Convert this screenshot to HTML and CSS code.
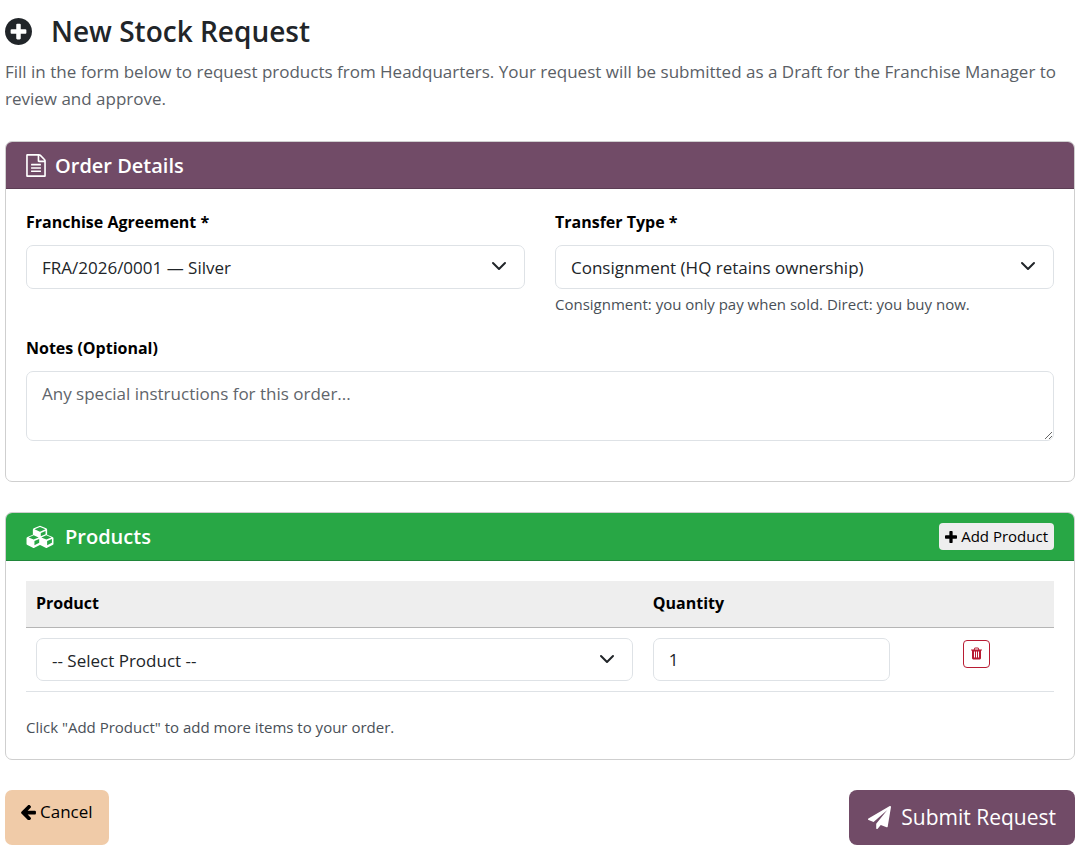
FILE: index.html
```html
<!DOCTYPE html>
<html lang="en">
<head>
<meta charset="utf-8">
<meta name="viewport" content="width=device-width, initial-scale=1">
<title>New Stock Request</title>
<link rel="stylesheet" href="styles.css">
</head>
<body>
<main class="page">
  <header class="intro">
    <h1 class="title">
      <svg class="icon icon-title" viewBox="128 128 1536 1536" aria-hidden="true"><path d="M1344 960v-128q0-26-19-45t-45-19h-256v-256q0-26-19-45t-45-19h-128q-26 0-45 19t-19 45v256h-256q-26 0-45 19t-19 45v128q0 26 19 45t45 19h256v256q0 26 19 45t45 19h128q26 0 45-19t19-45v-256h256q26 0 45-19t19-45zM1664 896q0 209-103 385.5t-279.5 279.5-385.5 103-385.5-103-279.5-279.5-103-385.5 103-385.5 279.5-279.5 385.5-103 385.5 103 279.5 279.5 103 385.5z"/></svg>
      New Stock Request
    </h1>
    <p class="lead">Fill in the form below to request products from Headquarters. Your request will be submitted as a Draft for the Franchise Manager to review and approve.</p>
  </header>

  <form class="form">
    <section class="card">
      <div class="card-header card-header-order">
        <h2 class="card-title">
          <svg class="icon icon-file" viewBox="0 0 1536 1792" aria-hidden="true"><path d="M1468 380q28 28 48 76t20 88v1152q0 40-28 68t-68 28H96q-40 0-68-28t-28-68V96q0-40 28-68t68-28h896q40 0 88 20t76 48zM1024 136v376h376q-10-29-22-41l-313-313q-12-12-41-22zM1408 1664V640H992q-40 0-68-28t-28-68V128H128v1536h1280zM384 800q0-14 9-23t23-9h704q14 0 23 9t9 23v64q0 14-9 23t-23 9H416q-14 0-23-9t-9-23v-64zM1120 1024q14 0 23 9t9 23v64q0 14-9 23t-23 9H416q-14 0-23-9t-9-23v-64q0-14 9-23t23-9h704zM1120 1280q14 0 23 9t9 23v64q0 14-9 23t-23 9H416q-14 0-23-9t-9-23v-64q0-14 9-23t23-9h704z"/></svg>
          Order Details
        </h2>
      </div>
      <div class="card-body order-body">
        <div class="field-row">
          <div class="field">
            <label class="label" for="agreement">Franchise Agreement *</label>
            <div class="select-wrap">
              <select class="control select" id="agreement"><option>FRA/2026/0001 — Silver</option></select>
              <svg class="chevron" viewBox="0 0 16 16" aria-hidden="true"><path d="m2 5 6 6 6-6"/></svg>
            </div>
          </div>
          <div class="field">
            <label class="label" for="transfer">Transfer Type *</label>
            <div class="select-wrap">
              <select class="control select" id="transfer"><option>Consignment (HQ retains ownership)</option><option>Direct</option></select>
              <svg class="chevron" viewBox="0 0 16 16" aria-hidden="true"><path d="m2 5 6 6 6-6"/></svg>
            </div>
            <small class="help">Consignment: you only pay when sold. Direct: you buy now.</small>
          </div>
        </div>
        <div class="field">
          <label class="label" for="notes">Notes (Optional)</label>
          <textarea class="control notes" id="notes" rows="2" placeholder="Any special instructions for this order..."></textarea>
        </div>
      </div>
    </section>

    <section class="card">
      <div class="card-header card-header-products">
        <h2 class="card-title card-title-wide">
          <svg class="icon icon-cubes" viewBox="0 0 2176 1856" aria-hidden="true"><path d="M640 1632l384-192v-314l-384 164v342zM576 1178l404-173-404-173-404 173zM1664 1632l384-192v-314l-384 164v342zM1600 1178l404-173-404-173-404 173zM1152 909l384-165v-266l-384 164v267zM1088 538l441-189-441-189-441 189zM2176 1088v416q0 36-19 67t-52 47l-448 224q-25 14-57 14t-57-14l-448-224q-4-2-7-4-2 2-7 4l-448 224q-25 14-57 14t-57-14l-448-224q-33-16-52-47t-19-67v-416q0-38 21.5-70t56.5-48l434-186v-400q0-38 21.5-70t56.5-48l448-192q23-10 50-10t50 10l448 192q35 16 56.5 48t21.5 70v400l434 186q36 16 57 48t21 70z"/></svg>
          Products
        </h2>
        <button class="btn btn-add" type="button">
          <svg class="icon icon-plus" viewBox="192 128 1408 1408" aria-hidden="true"><path d="M1600 736v192q0 40-28 68t-68 28h-416v416q0 40-28 68t-68 28h-192q-40 0-68-28t-28-68v-416h-416q-40 0-68-28t-28-68v-192q0-40 28-68t68-28h416v-416q0-40 28-68t68-28h192q40 0 68 28t28 68v416h416q40 0 68 28t28 68z"/></svg>
          Add Product
        </button>
      </div>
      <div class="card-body products-body">
        <table class="table">
          <thead>
            <tr><th class="col-product">Product</th><th class="col-quantity">Quantity</th><th class="col-remove"></th></tr>
          </thead>
          <tbody>
            <tr>
              <td>
                <div class="select-wrap">
                  <select class="control select" aria-label="Product"><option>-- Select Product --</option></select>
                  <svg class="chevron" viewBox="0 0 16 16" aria-hidden="true"><path d="m2 5 6 6 6-6"/></svg>
                </div>
              </td>
              <td><input class="control" type="text" inputmode="numeric" value="1" aria-label="Quantity"></td>
              <td class="remove-cell">
                <button class="btn btn-remove" type="button" aria-label="Remove">
                  <svg class="icon icon-trash" viewBox="192 128 1408 1536" aria-hidden="true"><path d="M704 1376v-704q0-14-9-23t-23-9h-64q-14 0-23 9t-9 23v704q0 14 9 23t23 9h64q14 0 23-9t9-23zM960 1376v-704q0-14-9-23t-23-9h-64q-14 0-23 9t-9 23v704q0 14 9 23t23 9h64q14 0 23-9t9-23zM1216 1376v-704q0-14-9-23t-23-9h-64q-14 0-23 9t-9 23v704q0 14 9 23t23 9h64q14 0 23-9t9-23zM672 384h448l-48-117q-7-9-17-11h-317q-10 2-17 11zM1600 416v64q0 14-9 23t-23 9h-96v948q0 83-47 143.5t-113 60.5h-832q-66 0-113-58.5t-47-141.5v-952h-96q-14 0-23-9t-9-23v-64q0-14 9-23t23-9h309l70-167q15-37 54-63t79-26h320q40 0 79 26t54 63l70 167h309q14 0 23 9t9 23z"/></svg>
                </button>
              </td>
            </tr>
          </tbody>
        </table>
        <p class="help">Click "Add Product" to add more items to your order.</p>
      </div>
    </section>

    <div class="actions">
      <a class="btn btn-cancel" href="#">
        <svg class="icon icon-arrow" viewBox="190 204 1474 1486" aria-hidden="true"><path d="M1664 896v128q0 53-32.500 90.500t-84.500 37.500h-704l293 294q38 36 38 90t-38 90l-75 76q-37 37-90 37-52 0-91-37l-651-652q-37-37-37-90 0-52 37-91l651-650q38-38 91-38 52 0 90 38l75 74q38 38 38 91t-38 91l-293 293h704q52 0 84.500 37.500t32.500 90.500z"/></svg>
        Cancel
      </a>
      <button class="btn btn-submit" type="submit">
        <svg class="icon icon-plane" viewBox="0 0 1792 1792" aria-hidden="true"><path d="M1764 11q33 24 27 64l-256 1536q-5 29-32 45-14 8-31 8-11 0-24-5l-453-185-242 295q-18 23-49 23-13 0-22-4-19-7-30.500-23.500t-11.500-36.500v-349l864-1059-1069 925-395-162q-37-14-40-55-2-40 32-59l1664-960q15-9 32-9 20 0 36 11z"/></svg>
        Submit Request
      </button>
    </div>
  </form>
</main>
</body>
</html>
```
FILE: styles.css
```css
* { box-sizing: border-box; }

body {
  margin: 0;
  background: #fff;
  color: #212529;
  font-family: "Segoe UI", "Open Sans", "Noto Sans", sans-serif;
  font-size: 17px;
  line-height: 27px;
}

h1, h2, p { margin: 0; }

.page { padding: 11px 10px 11px 5px; }

.icon {
  flex: none;
  fill: currentColor;
}

.title {
  display: flex;
  align-items: center;
  gap: 19px;
  margin-bottom: 7px;
  font-size: 28px;
  font-weight: 600;
  line-height: 40px;
}

.icon-title { width: 27px; height: 27px; }

.lead { color: #5a6066; }

.form {
  display: flex;
  flex-direction: column;
  gap: 30px;
  margin-top: 29px;
}

.card {
  border: 1px solid #cfcfcf;
  border-radius: 7px;
  overflow: hidden;
}

.card-header {
  display: flex;
  align-items: center;
  justify-content: space-between;
  padding: 10px 20px;
  border-bottom: 1px solid #5c3d54;
  color: #fff;
}

.card-header-order {
  padding-bottom: 9px;
  background: #714b67;
}

.card-header-products {
  background: #28a745;
  border-bottom-color: #20863a;
}

.card-title {
  display: flex;
  align-items: center;
  gap: 9px;
  font-size: 20px;
  font-weight: 600;
  line-height: 27px;
}

.card-title-wide { gap: 11px; }

.icon-file { width: 20px; height: 23px; }
.icon-cubes { width: 28px; height: 23px; }

.card-body { padding: 20px; }

.order-body {
  display: flex;
  flex-direction: column;
  gap: 20px;
  padding-bottom: 40px;
}

.field-row {
  display: grid;
  grid-template-columns: 1fr 1fr;
  gap: 30px;
}

.field {
  display: flex;
  flex-direction: column;
}

.label {
  margin-bottom: 9px;
  color: #000;
  font-size: 16px;
  font-weight: 700;
}

.select-wrap { position: relative; }

.control {
  display: block;
  width: 100%;
  height: 44px;
  margin: 0;
  padding: 8px 15px;
  border: 1px solid #dee2e6;
  border-radius: 7px;
  background: #fff;
  color: #212529;
  font: inherit;
}

.select {
  appearance: none;
  padding-right: 48px;
}

.notes {
  height: 70px;
  resize: vertical;
}

.notes::placeholder { color: #5f656b; }

.chevron {
  position: absolute;
  top: 13px;
  right: 18px;
  width: 16px;
  height: 16px;
  fill: none;
  stroke: #212529;
  stroke-width: 2;
  stroke-linecap: round;
  stroke-linejoin: round;
  pointer-events: none;
}

.help {
  margin-top: 4px;
  color: #495057;
  font-size: 15px;
  line-height: 22px;
}

.table {
  width: 100%;
  border-collapse: collapse;
  table-layout: fixed;
}

.table th {
  height: 46px;
  padding: 0 10px;
  border-bottom: 1px solid #b5b5b5;
  background: #eee;
  color: #000;
  font-size: 16px;
  font-weight: 700;
  text-align: left;
}

.table td {
  padding: 10px;
  border-bottom: 1px solid #dee2e6;
  vertical-align: top;
}

.table .control { height: 43px; }

.col-product { width: 60%; }
.col-quantity { width: 25%; }
.col-remove { width: 15%; }

.table .remove-cell { padding-top: 12px; }

.products-body { padding-bottom: 21px; }
.products-body .help { margin-top: 24px; }

.btn {
  display: flex;
  border: 0;
  font: inherit;
  text-decoration: none;
  cursor: pointer;
}

.btn-add {
  align-items: center;
  gap: 4px;
  padding: 0 6px;
  border-radius: 4px;
  background: #eee;
  color: #000;
  font-size: 15px;
}

.icon-plus { width: 12px; height: 12px; }

.btn-remove {
  align-items: center;
  justify-content: center;
  width: 27px;
  height: 28px;
  margin: 0 auto;
  padding: 0;
  border: 1px solid #b81c33;
  border-radius: 4px;
  background: #fff;
  color: #b81c33;
}

.icon-trash { width: 11px; height: 13px; }

.actions {
  display: flex;
  justify-content: space-between;
}

.btn-cancel {
  align-items: flex-start;
  gap: 4px;
  padding: 8px 16px;
  border-radius: 7px;
  background: #f0cba8;
  color: #000;
}

.icon-arrow {
  width: 15px;
  height: 15px;
  margin-top: 7px;
}

.btn-submit {
  align-items: center;
  gap: 10px;
  padding: 14px 19px;
  border-radius: 8px;
  background: #714b67;
  color: #fff;
  font-size: 21px;
}

.icon-plane { width: 23px; height: 23px; }
```
